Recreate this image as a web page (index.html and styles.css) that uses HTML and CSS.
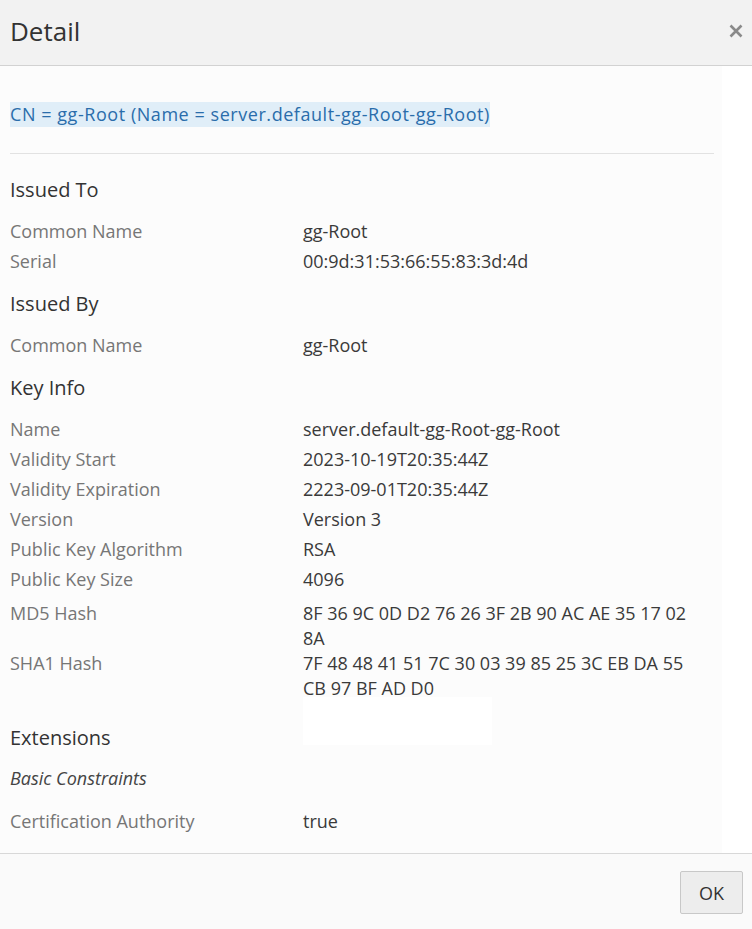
FILE: index.html
```html
<!DOCTYPE html>
<html lang="en">
<head>
<meta charset="utf-8">
<title>Detail</title>
<link rel="stylesheet" href="styles.css">
</head>
<body>
<div class="dialog">
  <header class="dlg-header">
    <h1 class="dlg-title">Detail</h1>
    <button class="dlg-close" aria-label="Close">
      <svg width="14" height="14" viewBox="0 0 14 14"><path d="M1.5 1.5 L12.5 12.5 M12.5 1.5 L1.5 12.5" stroke="#8a8a8a" stroke-width="2.6" fill="none"/></svg>
    </button>
  </header>
  <main class="dlg-body">
    <div class="cert-name"><span class="cert-link">CN = gg-Root (Name = server.default-gg-Root-gg-Root)</span></div>
    <hr class="divider">

    <section class="group group-first">
      <h2 class="group-title">Issued To</h2>
      <div class="prop"><span class="prop-label">Common Name</span><span class="prop-value">gg-Root</span></div>
      <div class="prop"><span class="prop-label">Serial</span><span class="prop-value">00:9d:31:53:66:55:83:3d:4d</span></div>
    </section>

    <section class="group">
      <h2 class="group-title">Issued By</h2>
      <div class="prop"><span class="prop-label">Common Name</span><span class="prop-value">gg-Root</span></div>
    </section>

    <section class="group">
      <h2 class="group-title">Key Info</h2>
      <div class="prop"><span class="prop-label">Name</span><span class="prop-value">server.default-gg-Root-gg-Root</span></div>
      <div class="prop"><span class="prop-label">Validity Start</span><span class="prop-value">2023-10-19T20:35:44Z</span></div>
      <div class="prop"><span class="prop-label">Validity Expiration</span><span class="prop-value">2223-09-01T20:35:44Z</span></div>
      <div class="prop"><span class="prop-label">Version</span><span class="prop-value">Version 3</span></div>
      <div class="prop"><span class="prop-label">Public Key Algorithm</span><span class="prop-value">RSA</span></div>
      <div class="prop"><span class="prop-label">Public Key Size</span><span class="prop-value">4096</span></div>
      <div class="prop prop-hash prop-hash-first"><span class="prop-label">MD5 Hash</span><span class="prop-value">8F 36 9C 0D D2 76 26 3F 2B 90 AC AE 35 17 02 8A</span></div>
      <div class="prop prop-hash"><span class="prop-label">SHA1 Hash</span><span class="prop-value">7F 48 48 41 51 7C 30 03 39 85 25 3C EB DA 55 CB 97 BF AD D0</span></div>
    </section>

    <section class="group group-ext">
      <h2 class="group-title">Extensions</h2>
      <h3 class="ext-title">Basic Constraints</h3>
      <div class="prop"><span class="prop-label">Certification Authority</span><span class="prop-value">true</span></div>
    </section>

    <div class="overlay-blank"></div>
  </main>
  <footer class="dlg-footer">
    <button class="btn">OK</button>
  </footer>
</div>
</body>
</html>
```

FILE: styles.css
```css
* { box-sizing: border-box; }

html, body {
  margin: 0;
  padding: 0;
  background: #ffffff;
}

body {
  font-family: "Open Sans", "Noto Sans", sans-serif;
  font-size: 18px;
  color: #333333;
}

.dialog {
  width: 752px;
  height: 929px;
  display: flex;
  flex-direction: column;
  overflow: hidden;
}

.dlg-header {
  height: 66px;
  flex: none;
  background: #f2f2f2;
  border-bottom: 1px solid #d2d2d2;
  display: flex;
  align-items: center;
  justify-content: space-between;
  padding: 0 9px 0 10px;
}

.dlg-title {
  margin: 0;
  font-size: 26px;
  font-weight: 400;
  color: #333333;
  line-height: 1;
  padding-bottom: 3px;
}

.dlg-close {
  border: 0;
  background: transparent;
  padding: 0;
  width: 14px;
  height: 14px;
  display: flex;
  margin-bottom: 3px;
}

.dlg-body {
  flex: 1;
  position: relative;
  width: 722px;
  background: #fcfcfc;
  padding: 36px 8px 0 10px;
  overflow: hidden;
}

.cert-name {
  line-height: 25px;
}

.cert-link {
  display: inline-block;
  line-height: 25px;
  color: #2a6dab;
  background: #e0eef8;
  letter-spacing: 0.55px;
}

.divider {
  margin: 26px 0 0 0;
  border: 0;
  border-top: 1px solid #e2e2e2;
  height: 0;
}

.group {
  margin-top: 14px;
}

.group-first {
  margin-top: 22px;
}

.group-ext {
  margin-top: 23.5px;
}

.group-title {
  margin: 0 0 12px 0;
  font-size: 20px;
  font-weight: 400;
  line-height: 28px;
  color: #333333;
}

.ext-title {
  margin: 13.5px 0 15.5px 0;
  font-size: 18px;
  font-weight: 400;
  font-style: italic;
  line-height: 25px;
  color: #444444;
}

.group-ext .group-title {
  margin-bottom: 0;
}

.prop {
  display: grid;
  grid-template-columns: 293px 400px;
  padding: 2.5px 0;
  line-height: 25px;
}

.prop-hash {
  padding: 0;
}

.prop-hash-first {
  margin-top: 6.5px;
}

.prop-label {
  color: #767676;
}

.prop-value {
  color: #3a3a3a;
}

.overlay-blank {
  position: absolute;
  left: 303px;
  top: 631px;
  width: 189px;
  height: 48px;
  background: #ffffff;
}

.dlg-footer {
  height: 76px;
  flex: none;
  background: #fafafa;
  border-top: 1px solid #d8d8d8;
  display: flex;
  justify-content: flex-end;
  align-items: flex-start;
  padding: 17px 9px 0 0;
}

.btn {
  width: 63px;
  height: 43px;
  font-family: "Open Sans", "Noto Sans", sans-serif;
  font-size: 18px;
  color: #333333;
  background: #ededed;
  border: 1px solid #c8c8c8;
  border-radius: 2px;
  padding: 0;
}
```
